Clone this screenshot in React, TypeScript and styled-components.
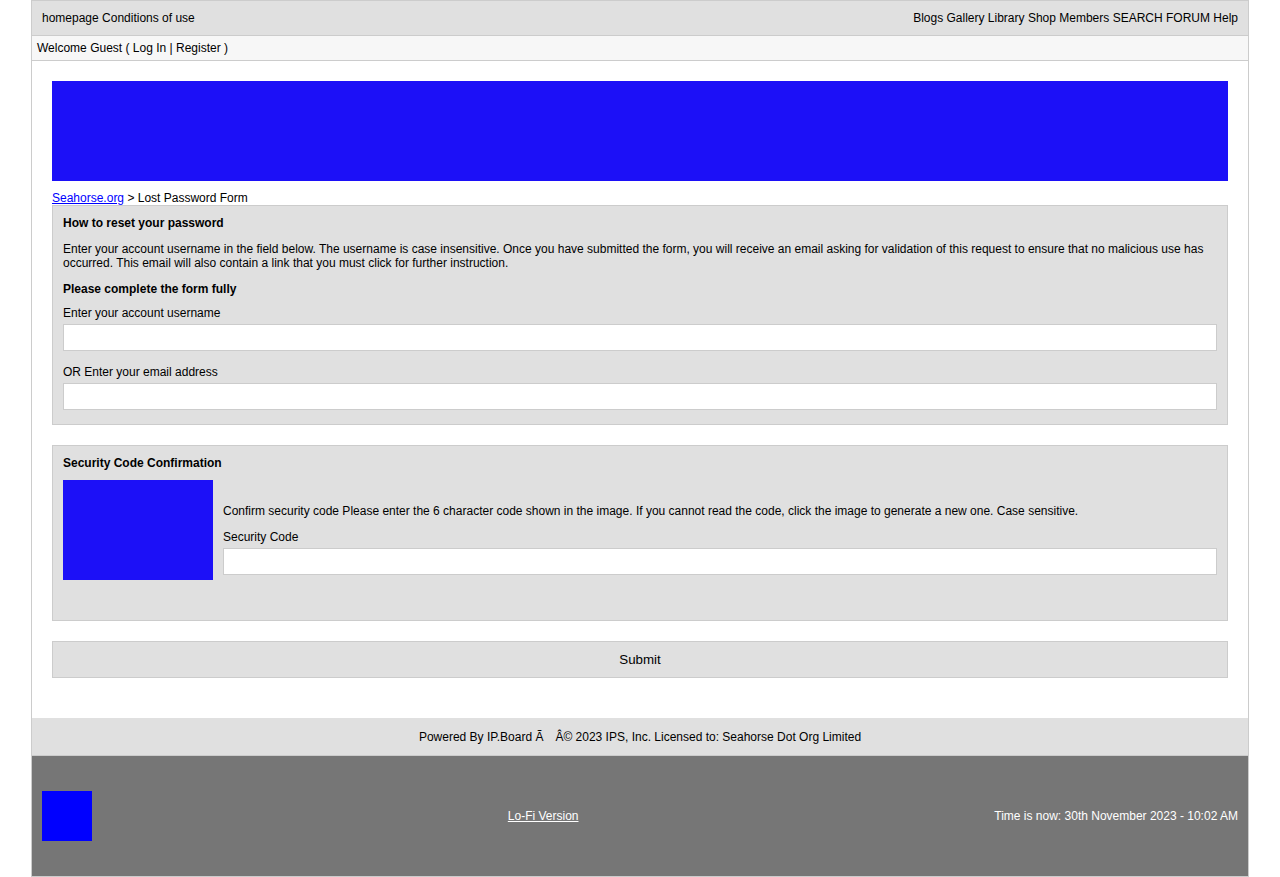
import React from "react";
import styled, { createGlobalStyle } from "styled-components";

const colors = {
  panel: "#e0e0e0",
  line: "#cccccc",
  strip: "#f7f7f7",
  image: "#1c10f7",
  badge: "#0000ff",
  link: "#0000ff",
  footer: "#767676",
};

const GlobalStyle = createGlobalStyle`
  body {
    margin: 0;
    background: #ffffff;
    color: #000000;
    font-family: "Liberation Sans", Arial, Helvetica, sans-serif;
    font-size: 12px;
    line-height: 14px;
  }
`;

const Page = styled.div`
  box-sizing: content-box;
  width: 95%;
  margin: 0 auto;
  border: 1px solid ${colors.line};
`;

const TopBar = styled.header`
  display: flex;
  justify-content: space-between;
  padding: 10px;
  background: ${colors.panel};
  border-bottom: 1px solid ${colors.line};
`;

const PlainLink = styled.a`
  color: inherit;
  text-decoration: none;
`;

const WelcomeStrip = styled.div`
  padding: 5px;
  background: ${colors.strip};
  border-bottom: 1px solid ${colors.line};
`;

const Content = styled.main`
  padding: 20px;
`;

const Banner = styled.div`
  height: 100px;
  margin-bottom: 10px;
  background: ${colors.image};
`;

const CrumbLink = styled.a`
  color: ${colors.link};
`;

const Panel = styled.section`
  padding: 10px;
  margin-bottom: 20px;
  background: ${colors.panel};
  border: 1px solid ${colors.line};
`;

const PanelTitle = styled.h2`
  margin: 0 0 10px;
  font-size: 12px;
  font-weight: bold;
`;

const Paragraph = styled.p`
  margin: 12px 0;
`;

const Field = styled.div`
  display: flex;
  flex-direction: column;
  gap: 4px;
  padding-bottom: 4px;

  & + & {
    margin-top: 10px;
  }
`;

const TextInput = styled.input`
  box-sizing: border-box;
  width: 100%;
  height: 27px;
  padding: 5px;
  border: 1px solid ${colors.line};
  background: #ffffff;
  font: inherit;
`;

const CodeRow = styled.div`
  display: flex;
  align-items: flex-start;
  gap: 10px;
  padding-bottom: 30px;
`;

const CodeImage = styled.button`
  flex: none;
  width: 150px;
  height: 100px;
  padding: 0;
  border: 0;
  background: ${colors.image};
  cursor: pointer;
`;

const CodeFields = styled.div`
  flex: 1;
  padding-top: 12px;
`;

const SubmitButton = styled.button`
  display: block;
  width: 100%;
  padding: 10px;
  margin-bottom: 20px;
  border: 1px solid ${colors.line};
  background: ${colors.panel};
  color: inherit;
  font-family: inherit;
  line-height: 15px;
`;

const Credits = styled.div`
  padding: 12px 10px 11px;
  background: ${colors.panel};
  border-bottom: 1px solid ${colors.line};
  text-align: center;
`;

const Footer = styled.footer`
  display: flex;
  align-items: center;
  justify-content: space-between;
  padding: 35px 10px;
  background: ${colors.footer};
  color: #ffffff;
`;

const FooterBadge = styled.div`
  width: 50px;
  height: 50px;
  background: ${colors.badge};
`;

const FooterLink = styled.a`
  color: inherit;
`;

const siteLinks = ["Blogs", "Gallery", "Library", "Shop", "Members", "SEARCH FORUM", "Help"];

function LinkList({ items }: { items: string[] }) {
  return (
    <nav>
      {items.map((item, index) => (
        <React.Fragment key={item}>
          {index > 0 && " "}
          <PlainLink href="#">{item}</PlainLink>
        </React.Fragment>
      ))}
    </nav>
  );
}

function LabeledField({ id, label }: { id: string; label: string }) {
  return (
    <Field>
      <label htmlFor={id}>{label}</label>
      <TextInput id={id} name={id} type="text" />
    </Field>
  );
}

export default function App() {
  return (
    <>
      <GlobalStyle />
      <Page>
        <TopBar>
          <LinkList items={["homepage", "Conditions of use"]} />
          <LinkList items={siteLinks} />
        </TopBar>
        <WelcomeStrip>
          Welcome Guest ( <PlainLink href="#">Log In</PlainLink> |{" "}
          <PlainLink href="#">Register</PlainLink> )
        </WelcomeStrip>
        <Content>
          <Banner />
          <div>
            <CrumbLink href="#">Seahorse.org</CrumbLink> &gt; Lost Password Form
          </div>
          <form onSubmit={(event) => event.preventDefault()}>
            <Panel>
              <PanelTitle>How to reset your password</PanelTitle>
              <Paragraph>
                Enter your account username in the field below. The username is case insensitive. Once
                you have submitted the form, you will receive an email asking for validation of this
                request to ensure that no malicious use has occurred. This email will also contain a
                link that you must click for further instruction.
              </Paragraph>
              <PanelTitle>Please complete the form fully</PanelTitle>
              <LabeledField id="username" label="Enter your account username" />
              <LabeledField id="email" label="OR Enter your email address" />
            </Panel>
            <Panel>
              <PanelTitle>Security Code Confirmation</PanelTitle>
              <CodeRow>
                <CodeImage type="button" aria-label="Generate a new security code" />
                <CodeFields>
                  <Paragraph>
                    Confirm security code Please enter the 6 character code shown in the image. If you
                    cannot read the code, click the image to generate a new one. Case sensitive.
                  </Paragraph>
                  <LabeledField id="code" label="Security Code" />
                </CodeFields>
              </CodeRow>
            </Panel>
            <SubmitButton type="submit">Submit</SubmitButton>
          </form>
        </Content>
        <Credits>
          Powered By IP.Board Ã&emsp;Â© 2023 IPS, Inc. Licensed to: Seahorse Dot Org Limited
        </Credits>
        <Footer>
          <FooterBadge />
          <FooterLink href="#">Lo-Fi Version</FooterLink>
          <span>Time is now: 30th November 2023 - 10:02 AM</span>
        </Footer>
      </Page>
    </>
  );
}
